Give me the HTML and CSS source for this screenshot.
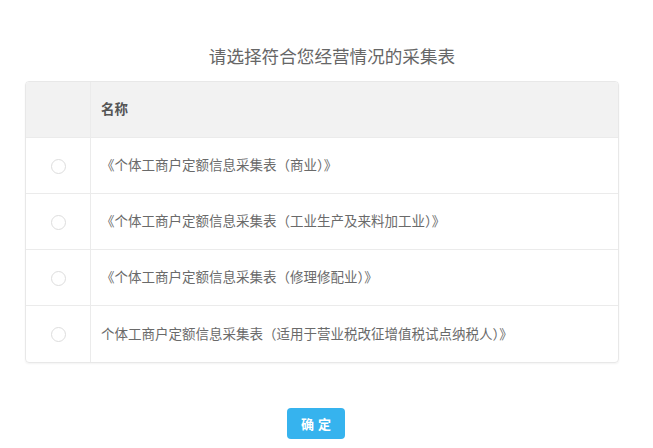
FILE: index.html
```html
<!DOCTYPE html>
<html lang="zh-CN">
<head>
  <meta charset="UTF-8">
  <meta name="viewport" content="width=device-width, initial-scale=1.0">
  <title>采集表选择</title>
  <link rel="stylesheet" href="styles.css">
</head>
<body>
  <div class="wrap">
    <h2 class="title">请选择符合您经营情况的采集表</h2>
    <table class="sheet-table">
      <thead>
        <tr>
          <th class="col-check"></th>
          <th class="col-name">名称</th>
        </tr>
      </thead>
      <tbody>
        <tr>
          <td class="col-check"><span class="radio"></span></td>
          <td class="col-name">《个体工商户定额信息采集表（商业）》</td>
        </tr>
        <tr>
          <td class="col-check"><span class="radio"></span></td>
          <td class="col-name">《个体工商户定额信息采集表（工业生产及来料加工业）》</td>
        </tr>
        <tr>
          <td class="col-check"><span class="radio"></span></td>
          <td class="col-name">《个体工商户定额信息采集表（修理修配业）》</td>
        </tr>
        <tr>
          <td class="col-check"><span class="radio"></span></td>
          <td class="col-name">个体工商户定额信息采集表（适用于营业税改征增值税试点纳税人）》</td>
        </tr>
      </tbody>
    </table>
    <div class="actions">
      <button class="btn-ok">确定</button>
    </div>
  </div>
</body>
</html>
```

FILE: styles.css
```css
body {
  margin: 0;
  background-color: #fff;
  font-family: "Noto Sans CJK SC", "Liberation Sans", sans-serif;
}
.wrap {
  width: 594px;
  padding: 44px 0 0 25px;
}
.title {
  margin: 0 0 13px;
  padding-left: 20px;
  font-size: 17.6px;
  line-height: 24px;
  font-weight: normal;
  color: #666;
  text-align: center;
}
.sheet-table {
  width: 100%;
  border: 1px solid #e8e8e8;
  border-radius: 4px;
  border-collapse: separate;
  border-spacing: 0;
  box-shadow: 0 1px 2px rgba(0,0,0,0.05);
  overflow: hidden;
}
.sheet-table th,
.sheet-table td {
  height: 56px;
  padding: 0 0 3px;
  box-sizing: border-box;
  border-bottom: 1px solid #ebebeb;
  font-size: 13.5px;
  text-align: left;
}
.sheet-table tbody tr:last-child td {
  border-bottom: none;
}
.sheet-table th {
  background-color: #f2f2f2;
  color: #555;
  font-weight: bold;
}
.sheet-table td {
  color: #6a6a6a;
}
.col-check {
  width: 65px;
  border-right: 1px solid #ebebeb;
  text-align: center !important;
}
.col-name {
  padding-left: 10px !important;
}
.radio {
  display: inline-block;
  width: 13px;
  height: 13px;
  border: 1px solid #ddd;
  border-radius: 50%;
  vertical-align: middle;
}
.actions {
  display: flex;
  justify-content: center;
  padding-right: 12px;
  margin-top: 45px;
}
.btn-ok {
  width: 58px;
  height: 31px;
  padding: 0 0 0 4px;
  border: none;
  border-radius: 4px;
  background-color: #36b3ee;
  color: #fff;
  font-family: inherit;
  font-size: 13px;
  font-weight: bold;
  letter-spacing: 4px;
  cursor: pointer;
}
```
